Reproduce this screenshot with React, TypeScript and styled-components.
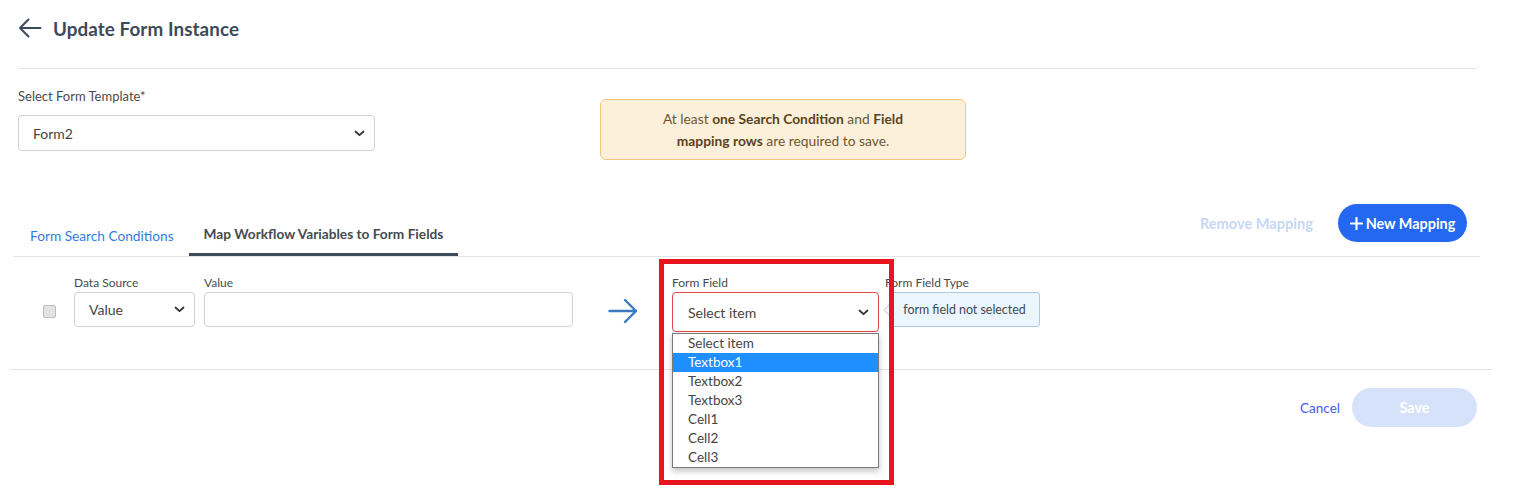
import React from "react";
import styled, { createGlobalStyle } from "styled-components";

const GlobalStyle = createGlobalStyle`
  html, body {
    margin: 0;
    padding: 0;
    background: #ffffff;
    font-family: "Lato", "Noto Sans", sans-serif;
    color: #444;
  }
  * { box-sizing: border-box; }
`;

const Page = styled.div`
  width: 1514px;
  height: 499px;
  overflow: hidden;
  position: relative;
`;

const Header = styled.div`
  height: 56px;
  display: flex;
  align-items: center;
  gap: 11px;
  padding-left: 18px;
  color: #3c4a5a;
`;

const Title = styled.h1`
  margin: 0;
  font-size: 18.8px;
  font-weight: 700;
  color: #3c4a5a;
  letter-spacing: 0.1px;
`;

const Divider = styled.div<{ $left: number; $right: number; $color?: string }>`
  height: 1px;
  background: ${(p) => p.$color || "#e3e5e8"};
  margin-left: ${(p) => p.$left}px;
  margin-right: ${(p) => p.$right}px;
`;

const HeaderDivider = styled(Divider)`
  margin-top: 12px;
`;

const TemplateSection = styled.div`
  display: flex;
  align-items: flex-start;
  padding-left: 18px;
  margin-top: 19px;
`;

const Field = styled.div`
  display: flex;
  flex-direction: column;
  gap: 2px;
  position: relative;
`;

const TemplateField = styled(Field)`
  gap: 11px;
`;

const Label = styled.label<{ $size?: number; $shift?: number }>`
  font-size: ${(p) => p.$size || 12}px;
  line-height: ${(p) => (p.$size || 12) + 3}px;
  color: #4a4a4a;
  margin-left: ${(p) => p.$shift || 0}px;
`;

const SelectBox = styled.div<{ $w: number; $h: number; $error?: boolean; $pad?: number }>`
  width: ${(p) => p.$w}px;
  height: ${(p) => p.$h}px;
  border: 1px solid ${(p) => (p.$error ? "#e0474c" : "#cfd2d6")};
  border-radius: 4px;
  display: flex;
  align-items: center;
  justify-content: space-between;
  padding: 0 9px 0 ${(p) => p.$pad || 14}px;
  font-size: 14px;
  color: #444;
  background: #fff;
`;

const TextInput = styled.div<{ $w: number }>`
  width: ${(p) => p.$w}px;
  height: 35px;
  border: 1px solid #cfd2d6;
  border-radius: 4px;
  background: #fff;
`;

const Alert = styled.div`
  margin-left: 225px;
  margin-top: 11px;
  width: 366px;
  height: 61px;
  background: #fdf0db;
  border: 1px solid #f6c67c;
  border-radius: 6px;
  display: flex;
  align-items: center;
  justify-content: center;
  text-align: center;
  font-size: 13.8px;
  line-height: 22px;
  color: #6b5632;

  b {
    color: #5a4420;
    font-weight: 700;
  }
`;

const TabsBar = styled.div`
  display: flex;
  align-items: flex-end;
  margin: 44px 34px 0 13px;
  border-bottom: 1px solid #e4e6e9;
`;

const Tab = styled.div<{ $active?: boolean }>`
  padding: 0 15px ${(p) => (p.$active ? 11 : 9)}px ${(p) => (p.$active ? 15 : 17)}px;
  border-bottom: 3px solid ${(p) => (p.$active ? "#3d4b5c" : "transparent")};
  font-size: 13.7px;
  line-height: 16px;
  font-weight: ${(p) => (p.$active ? 700 : 400)};
  color: ${(p) => (p.$active ? "#454b52" : "#2f7de1")};
  white-space: nowrap;
`;

const Actions = styled.div`
  margin-left: auto;
  display: flex;
  align-items: center;
  gap: 25px;
  padding-right: 13px;
  margin-bottom: 14px;
`;

const LinkButton = styled.span<{ $color: string; $bold?: boolean }>`
  font-size: ${(p) => (p.$bold ? 14.6 : 13.5)}px;
  font-weight: ${(p) => (p.$bold ? 700 : 400)};
  color: ${(p) => p.$color};
`;

const PillButton = styled.button<{ $bg: string; $w: number; $h: number }>`
  width: ${(p) => p.$w}px;
  height: ${(p) => p.$h}px;
  border: none;
  border-radius: ${(p) => p.$h / 2}px;
  background: ${(p) => p.$bg};
  color: #fff;
  font-family: inherit;
  font-size: 14.4px;
  font-weight: 700;
  display: flex;
  align-items: center;
  justify-content: center;
  gap: 3px;
  padding: 0;
`;

const MappingRow = styled.div`
  display: flex;
  align-items: flex-start;
  padding: 18px 0 37px 43px;
`;

const Checkbox = styled.div`
  width: 13px;
  height: 13px;
  margin-top: 30px;
  margin-right: 18px;
  border: 1px solid #bdbdbd;
  border-radius: 2px;
  background: #e2e2e2;
`;

const Spacer = styled.div<{ $w: number }>`
  width: ${(p) => p.$w}px;
  flex: none;
`;

const ArrowWrap = styled.div`
  margin-top: 23px;
  width: 30px;
  display: flex;
  color: #3a78c2;
`;

const TypeBox = styled.div`
  position: relative;
  width: 151px;
  height: 35px;
  border: 1px solid #acc9e2;
  border-radius: 3px;
  background: #eaf5fd;
  display: flex;
  align-items: center;
  justify-content: center;
  font-size: 12.4px;
  color: #3f4a55;

  &::before {
    content: "";
    position: absolute;
    left: -7px;
    top: 11px;
    width: 0;
    height: 0;
    border-top: 6px solid transparent;
    border-bottom: 6px solid transparent;
    border-right: 6px solid #d5dde5;
  }
  &::after {
    content: "";
    position: absolute;
    left: -5px;
    top: 12px;
    width: 0;
    height: 0;
    border-top: 5px solid transparent;
    border-bottom: 5px solid transparent;
    border-right: 5px solid #f4f8fb;
  }
`;

const TypeField = styled(Field)`
  margin-left: 10px;
`;

const Dropdown = styled.ul`
  position: absolute;
  top: 58px;
  left: 0;
  width: 207px;
  margin: 0;
  padding: 0;
  list-style: none;
  background: #fff;
  border: 1px solid #7a7a7a;
  box-shadow: 0 3px 6px rgba(0, 0, 0, 0.25);
  z-index: 2;
`;

const Option = styled.li<{ $selected?: boolean }>`
  height: 19px;
  line-height: 19px;
  padding-left: 15px;
  font-size: 13.5px;
  background: ${(p) => (p.$selected ? "#1f8fff" : "#fff")};
  color: ${(p) => (p.$selected ? "#fff" : "#444")};
`;

const Highlight = styled.div`
  position: absolute;
  left: -13px;
  top: -16px;
  width: 235px;
  height: 226px;
  border: 5px solid #e8141e;
  pointer-events: none;
  z-index: 3;
`;

const Footer = styled.div`
  display: flex;
  justify-content: flex-end;
  align-items: center;
  gap: 12px;
  padding-right: 37px;
  margin-top: 18px;
`;

const Chevron = () => (
  <svg width="11" height="7" viewBox="0 0 11 7" fill="none">
    <path d="M1.5 1.5 L5.5 5.2 L9.5 1.5" stroke="#333" strokeWidth="1.8" strokeLinecap="round" strokeLinejoin="round" />
  </svg>
);

const options = ["Select item", "Textbox1", "Textbox2", "Textbox3", "Cell1", "Cell2", "Cell3"];

export default function App() {
  return (
    <Page>
      <GlobalStyle />
      <Header>
        <svg width="24" height="20" viewBox="0 0 24 20" fill="none">
          <path d="M22.5 10 H2 M10.5 1.5 L2 10 L10.5 18.5" stroke="#3c4a5a" strokeWidth="2" strokeLinecap="round" strokeLinejoin="round" />
        </svg>
        <Title>Update Form Instance</Title>
      </Header>
      <HeaderDivider $left={18} $right={38} />

      <TemplateSection>
        <TemplateField>
          <Label $size={13}>Select Form Template*</Label>
          <SelectBox $w={357} $h={36}>
            Form2
            <Chevron />
          </SelectBox>
        </TemplateField>
        <Alert>
          <div>
            At least <b>one Search Condition</b> and <b>Field</b>
            <br />
            <b>mapping rows</b> are required to save.
          </div>
        </Alert>
      </TemplateSection>

      <TabsBar>
        <Tab>Form Search Conditions</Tab>
        <Tab $active>Map Workflow Variables to Form Fields</Tab>
        <Actions>
          <LinkButton $color="#c6d7f7" $bold>
            Remove Mapping
          </LinkButton>
          <PillButton $bg="#2468f2" $w={129} $h={38}>
            <svg width="13" height="13" viewBox="0 0 13 13">
              <path d="M6.5 1 V12 M1 6.5 H12" stroke="#fff" strokeWidth="2.2" strokeLinecap="round" />
            </svg>
            New Mapping
          </PillButton>
        </Actions>
      </TabsBar>

      <MappingRow>
        <Checkbox />
        <Field>
          <Label>Data Source</Label>
          <SelectBox $w={121} $h={35}>
            Value
            <Chevron />
          </SelectBox>
        </Field>
        <Spacer $w={9} />
        <Field>
          <Label>Value</Label>
          <TextInput $w={369} />
        </Field>
        <Spacer $w={35} />
        <ArrowWrap>
          <svg width="30" height="26" viewBox="0 0 30 26" fill="none">
            <path d="M1.5 13 H28 M17 2 L28 13 L17 24" stroke="currentColor" strokeWidth="2.4" strokeLinecap="round" strokeLinejoin="round" />
          </svg>
        </ArrowWrap>
        <Spacer $w={34} />
        <Field>
          <Label>Form Field</Label>
          <SelectBox $w={207} $h={40} $error $pad={15}>
            Select item
            <Chevron />
          </SelectBox>
          <Dropdown>
            {options.map((o, i) => (
              <Option key={o} $selected={i === 1}>
                {o}
              </Option>
            ))}
          </Dropdown>
          <Highlight />
        </Field>
        <TypeField>
          <Label $shift={-4}>Form Field Type</Label>
          <TypeBox>form field not selected</TypeBox>
        </TypeField>
      </MappingRow>
      <Divider $left={10} $right={22} $color="#dfe4ea" />

      <Footer>
        <LinkButton $color="#4b5ce6">Cancel</LinkButton>
        <PillButton $bg="#d5e2fa" $w={125} $h={39}>
          Save
        </PillButton>
      </Footer>
    </Page>
  );
}
